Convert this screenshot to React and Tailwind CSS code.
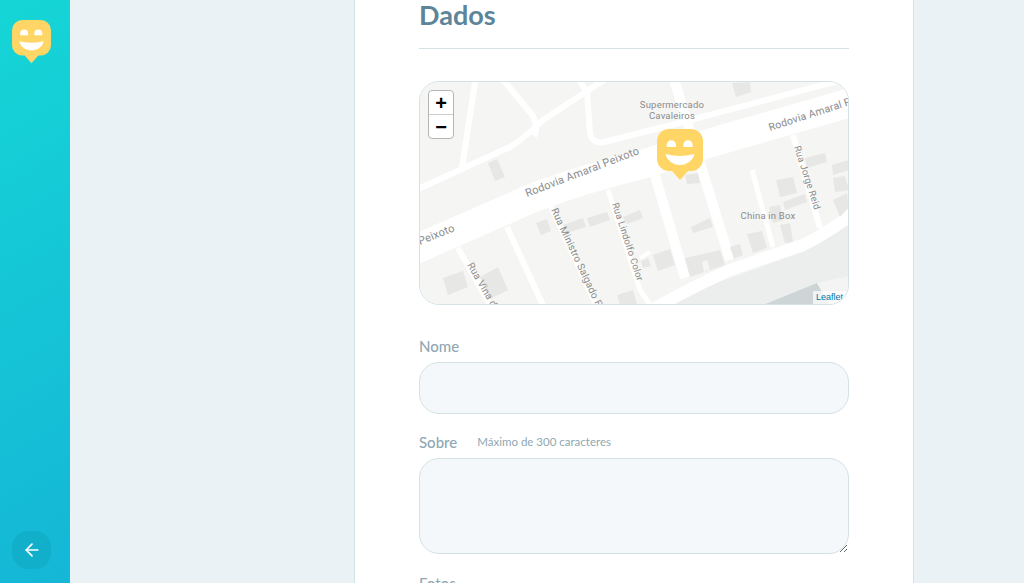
import { ArrowLeft } from "lucide-react";

const buildings = [
  "488,163 497,159 505,177 495,181",
  "732,83 750,82 751,92 736,97",
  "685,175 698,173 700,183 687,184",
  "805,158 825,153 827,162 807,168",
  "832,165 849,160 849,170 833,175",
  "776,180 793,177 797,193 780,197",
  "833,178 845,176 849,190 835,192",
  "536,223 547,219 551,231 541,235",
  "563,225 583,218 586,227 567,233",
  "587,218 607,212 610,220 590,227",
  "623,217 640,210 643,218 627,224",
  "443,278 463,271 468,287 448,295",
  "480,277 498,267 508,290 490,299",
  "617,295 633,290 637,305 620,305",
  "653,255 670,249 675,265 658,271",
  "641,261 648,258 651,266 643,268",
  "691,227 710,218 713,227 693,233",
  "685,258 720,250 725,265 690,277",
  "730,247 740,244 743,255 734,259",
  "747,234 762,231 767,248 753,253",
  "780,225 790,223 793,242 785,243",
  "769,207 780,205 783,220 773,223",
  "783,202 805,194 807,202 785,210",
  "833,200 847,193 849,207 840,217",
];

const roads = [
  { d: "M405 254 L535 197 Q590 177 640 165 L720 140 L860 100", w: 29 },
  { d: "M405 195 L510 147 C525 138 532 130 543 120 L610 76", w: 6 },
  { d: "M476 76 L462 168", w: 6 },
  { d: "M500 76 L533 116 C537 124 537 132 534 136", w: 6 },
  { d: "M577 76 L587 93 L590 132 C591 140 596 144 604 142 L683 122 L860 75", w: 6 },
  { d: "M458 248 L494 312", w: 6 },
  { d: "M507 227 L546 312", w: 6 },
  { d: "M550 205 L599 312", w: 5 },
  { d: "M608 190 L640 290 L655 312", w: 5 },
  { d: "M652 165 L685 278", w: 10 },
  { d: "M673 76 L730 260", w: 10 },
  { d: "M752 170 L773 247", w: 5 },
  { d: "M793 135 L820 228", w: 6 },
  { d: "M648 312 Q690 288 730 270 Q770 256 803 245 Q830 232 860 208", w: 12 },
  { d: "M640 258 L650 252", w: 4 },
];

const roadLabels = [
  { text: "Rodovia Amaral Peixoto", x: 527, y: 197, r: -21, size: 11 },
  { text: "Rodovia Amaral Peixoto", x: 770, y: 131, r: -18, size: 10.5 },
  { text: "Peixoto", x: 420, y: 245, r: -22, size: 11 },
  { text: "Rua Vina del Mar", x: 467, y: 265, r: 60, size: 10 },
  { text: "Rua Ministro Salgado Filho", x: 551, y: 210, r: 65, size: 10 },
  { text: "Rua Lindolfo Color", x: 612, y: 204, r: 72, size: 9.5 },
  { text: "Rua Jorge Reid", x: 794, y: 147, r: 72, size: 9.5 },
];

function Smile({ className }) {
  return (
    <svg viewBox="0 0 46 52" className={className}>
      <path d="M12 0 H34 A12 12 0 0 1 46 12 V30 A12 12 0 0 1 34 42 H31 L23 51 L15 42 H12 A12 12 0 0 1 0 30 V12 A12 12 0 0 1 12 0 Z" fill="#FFD666" />
      <path d="M9.7 18 V16 A4.65 4.65 0 0 1 19 16 V18 Z" fill="#fff" />
      <path d="M26.3 18 V16 A4.65 4.65 0 0 1 35.7 16 V18 Z" fill="#fff" />
      <path d="M8.7 25 Q23 29 37.3 25 C36.5 31 30 36 23 36 C16 36 9.5 31 8.7 25 Z" fill="#fff" />
    </svg>
  );
}

function MapTiles() {
  return (
    <svg viewBox="420 82 428 222" className="block w-full h-full">
      <rect x="420" y="82" width="428" height="222" fill="#f5f5f3" />
      <path d="M650 305 L730 278 L803 252 L849 225 V305 Z" fill="#eceeed" />
      <path d="M763 305 L817 283 L830 305 Z" fill="#cdd5d7" />
      <path d="M817 283 L849 276 V305 H830 Z" fill="#f3f4f3" />
      {roads.map((road) => (
        <path key={road.d} d={road.d} fill="none" stroke="#fff" strokeWidth={road.w} strokeLinejoin="round" />
      ))}
      {buildings.map((points) => (
        <polygon key={points} points={points} fill="#e7e7e5" />
      ))}
      <polygon points="702,262 707,260 710,269 704,272" fill="#f5f5f3" />
      <g className="font-['Roboto',sans-serif]" letterSpacing="0.2" fill="#8b8b8b">
        {roadLabels.map((label) => (
          <text key={label.x} x={label.x} y={label.y} fontSize={label.size} transform={`rotate(${label.r} ${label.x} ${label.y})`}>
            {label.text}
          </text>
        ))}
        <text x="672" y="108" textAnchor="middle" fontSize="9.5">Supermercado</text>
        <text x="672" y="119" textAnchor="middle" fontSize="9.5">Cavaleiros</text>
        <text x="768" y="219" textAnchor="middle" fontSize="9.5">China in Box</text>
      </g>
    </svg>
  );
}

export default function App() {
  return (
    <div className="flex h-[583px] overflow-hidden bg-[#ebf2f5] font-['Lato',sans-serif]">
      {/* Sidebar */}
      <aside className="flex w-[70px] shrink-0 flex-col items-start justify-between bg-[linear-gradient(329.54deg,#15b6d6_0%,#15d6d6_100%)] pt-5 pb-[14px] pl-3">
        <Smile className="block w-[39px] h-[44px]" />
        <button className="flex h-[38px] w-[39px] items-center justify-center rounded-2xl bg-[#12afcb] text-white">
          <ArrowLeft size={20} strokeWidth={2} />
        </button>
      </aside>

      {/* Form */}
      <main className="flex flex-1 justify-end pr-[110px]">
        <form className="w-[560px] shrink-0 border-x border-[#d3e2e5] bg-white px-16">
          <h2 className="h-[49px] border-b border-[#d3e2e5] text-[27px] leading-[30px] font-bold text-[#5c8599]">
            Dados
          </h2>

          <div className="relative mt-8 h-[224px] overflow-hidden rounded-[20px] border border-[#d3e2e5]">
            <MapTiles />
            <div className="absolute top-[8px] left-[8px] flex w-[26px] flex-col overflow-hidden rounded-[4px] border border-[#b5b5b5] bg-white font-['Liberation_Sans',sans-serif] text-[20px] font-bold text-black">
              <span className="flex h-[24px] items-center justify-center border-b border-[#ccc]">+</span>
              <span className="flex h-[23px] items-center justify-center">−</span>
            </div>
            <div className="absolute right-0 bottom-0 bg-white/70 pr-[5px] pl-[3px] font-['Liberation_Sans',sans-serif] text-[9px] leading-[13px] text-[#0078a8]">
              Leaflet
            </div>
            <Smile className="absolute top-[47px] left-[237px] w-[46px] h-[52px]" />
          </div>

          <label className="mt-8 block h-[25px] text-[15px] leading-[18px] font-medium text-[#8fa7b3]">Nome</label>
          <input className="block h-[52px] w-full rounded-[20px] border border-[#d3e2e5] bg-[#f5f8fa] px-6 outline-none" />

          <div className="mt-[19px] flex h-[25px] items-start">
            <label className="text-[15px] leading-[18px] font-medium text-[#8fa7b3]">Sobre</label>
            <span className="ml-5 text-[11.5px] leading-[18px] text-[#8fa7b3]">Máximo de 300 caracteres</span>
          </div>
          <textarea className="block h-[96px] w-full resize-y rounded-[20px] border border-[#d3e2e5] bg-[#f5f8fa] px-6 py-4 outline-none" />

          <label className="mt-5 block text-[15px] leading-[18px] font-medium text-[#8fa7b3]">Fotos</label>
        </form>
      </main>
    </div>
  );
}
